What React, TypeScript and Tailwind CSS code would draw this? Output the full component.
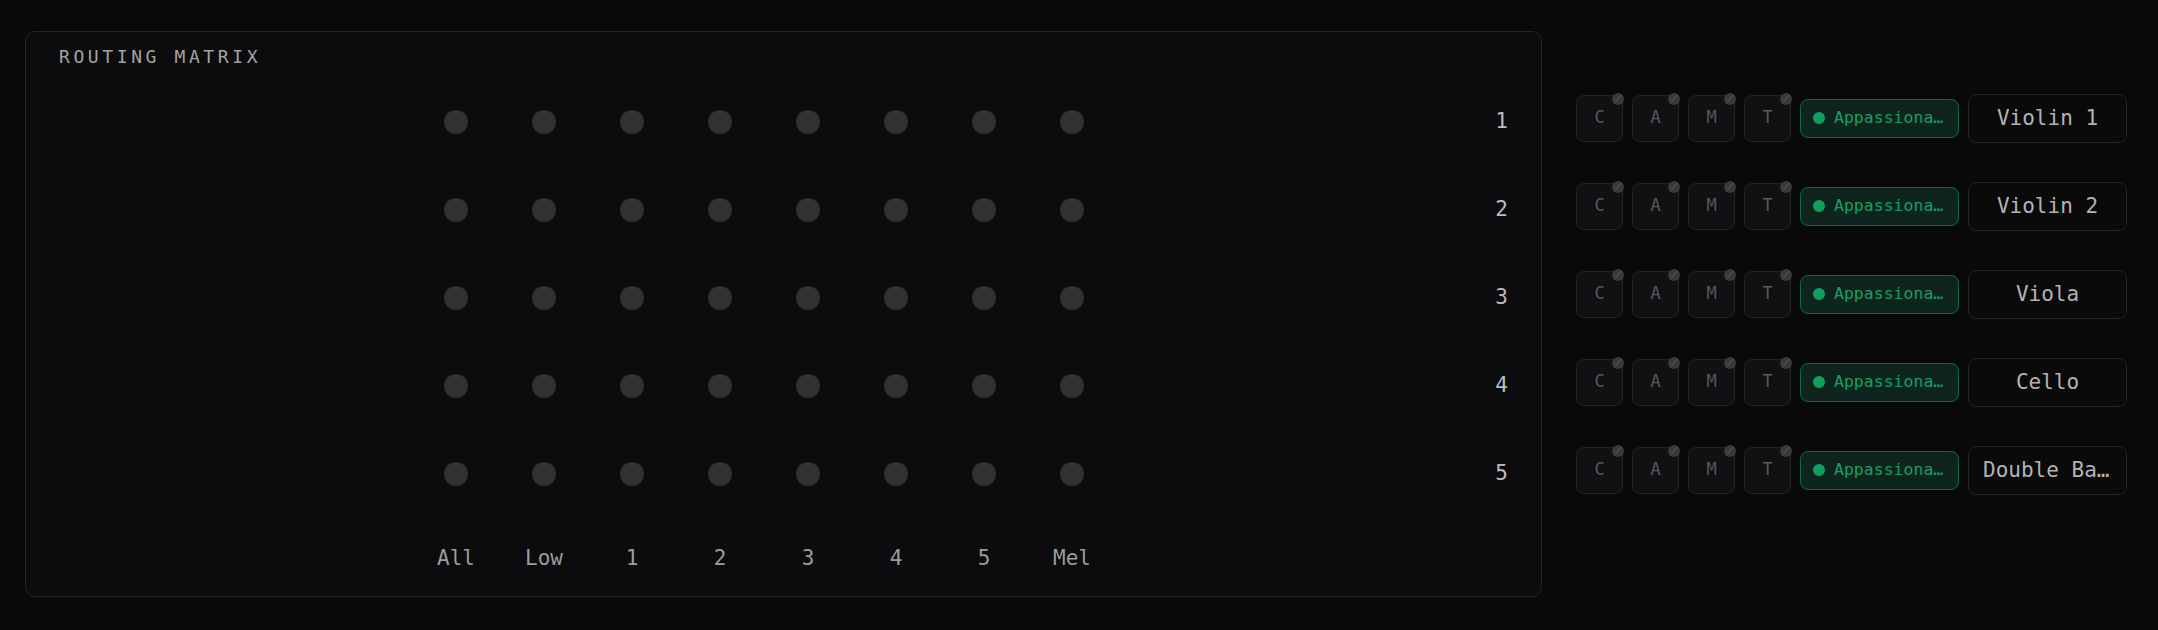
const mono = "font-['DejaVu_Sans_Mono','Liberation_Mono',monospace]";

const columns = ["All", "Low", "1", "2", "3", "4", "5", "Mel"];

const voices = [
  { id: 1, name: "Violin 1", patch: "Appassionata Strings" },
  { id: 2, name: "Violin 2", patch: "Appassionata Strings" },
  { id: 3, name: "Viola", patch: "Appassionata Strings" },
  { id: 4, name: "Cello", patch: "Appassionata Strings" },
  { id: 5, name: "Double Bass", patch: "Appassionata Strings" },
];

const toggles = ["C", "A", "M", "T"];

const ToggleKey = ({ label }: { label: string }) => (
  <div className="relative flex h-[47px] w-[47px] shrink-0 items-center justify-center rounded-[8px] border border-[#232326] bg-[#111114] text-[17px] text-[#57575b]">
    {label}
    <span className="absolute -right-[2px] -top-[3px] h-[12px] w-[12px] rounded-full bg-[linear-gradient(135deg,#3a3a3c_0%,#3a3a3c_42%,#4a4a4c_50%,#3a3a3c_58%,#3a3a3c_100%)]" />
  </div>
);

const App = () => {
  return (
    <div className={`min-h-screen w-full bg-[#09090b] ${mono}`}>
      <div className="flex gap-[34px] pb-[33px] pl-[25px] pr-[31px] pt-[31px]">
        {/* routing matrix panel */}
        <section className="h-[566px] flex-1 rounded-[10px] border border-[#232227] bg-[#0c0b0e] px-[33px] pt-[13px]">
          <h2 className="text-[18px] leading-[24px] tracking-[0.2em] text-[#a3a3a3]">
            ROUTING MATRIX
          </h2>
          <div className="mt-[9px]">
            {voices.map((v) => (
              <div key={v.id} className="flex h-[88px] items-center pl-[353px]">
                {columns.map((c) => (
                  <div key={c} className="flex w-[88px] justify-center">
                    <button className="h-[24px] w-[24px] rounded-full bg-[#333231]" />
                  </div>
                ))}
                <span className="ml-auto -translate-y-[1px] text-[21px] leading-none text-[#bdbdbd]">
                  {v.id}
                </span>
              </div>
            ))}
            <div className="flex h-[80px] items-center pl-[353px]">
              {columns.map((c) => (
                <div
                  key={c}
                  className="flex w-[88px] justify-center text-[21px] leading-none text-[#9c9c9c]"
                >
                  {c}
                </div>
              ))}
            </div>
          </div>
        </section>

        {/* voice strips */}
        <div className="w-[551px] shrink-0 pt-[43px]">
          {voices.map((v) => (
            <div key={v.id} className="flex h-[88px] items-center gap-[9px]">
              {toggles.map((t) => (
                <ToggleKey key={t} label={t} />
              ))}
              <div className="flex h-[39px] w-[159px] shrink-0 items-center gap-[9px] rounded-[8px] border-[1.5px] border-[#0d6a45] bg-[#0f241c] pl-[12px] pr-[13px]">
                <span className="h-[12px] w-[12px] shrink-0 rounded-full bg-[#0fa05e]" />
                <span className="min-w-0 truncate text-[16.5px] leading-[20px] text-[#16a063]">
                  {v.patch}
                </span>
              </div>
              <div className="flex h-[49px] w-[159px] shrink-0 items-center rounded-[8px] border border-[#242427] bg-[#0a0a0b] px-[14px]">
                <span className="w-full truncate text-center text-[21px] leading-[26px] text-[#b3b3b3]">
                  {v.name}
                </span>
              </div>
            </div>
          ))}
        </div>
      </div>
    </div>
  );
};

export default App;
